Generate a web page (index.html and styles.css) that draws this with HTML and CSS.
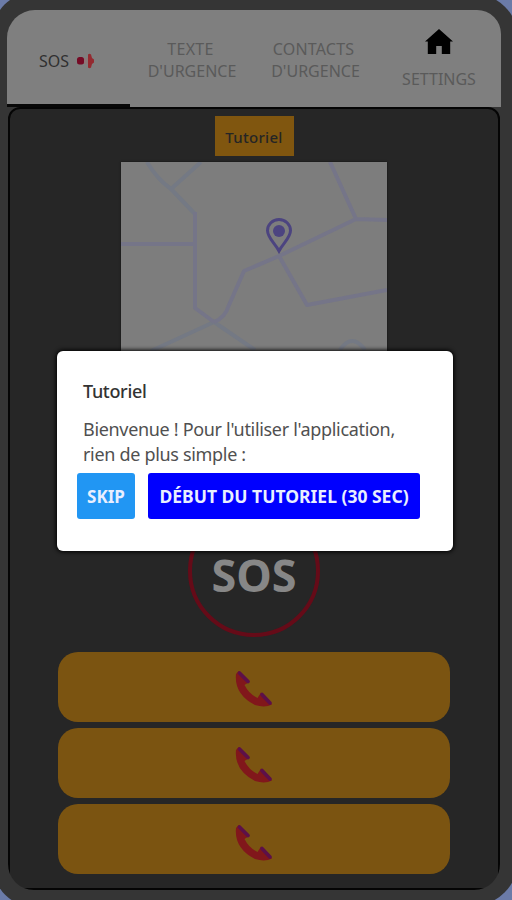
FILE: index.html
```html
<!DOCTYPE html>
<html lang="fr">
<head>
<meta charset="utf-8">
<title>SOS</title>
<link rel="stylesheet" href="styles.css">
</head>
<body>
<div class="phone">
  <div class="screen">
    <nav class="tabs">
      <div class="tab active"><span>SOS</span>
        <svg width="20" height="16" viewBox="0 0 20 16"><rect x="8" y="5" width="5" height="6" fill="#8b7778"/><rect x="2" y="4" width="7" height="7.500" rx="2.500" fill="#750a25"/><path d="M13 1.500q1.500-1.500 3 0l1 3.500 2 1.500v3L17 11l-1 3.500q-1.500 1.500-3 0z" fill="#942a30"/></svg>
      </div>
      <div class="tab two"><span class="texte">TEXTE</span><span>D'URGENCE</span></div>
      <div class="tab two"><span class="contacts">CONTACTS</span><span>D'URGENCE</span></div>
      <div class="tab settings">
        <svg width="28" height="26" viewBox="0 0 28 26"><path d="M14 0 0 12.500h2.800V25h8.400v-8h5.600v8h8.400V12.500H28z" fill="#000"/></svg>
        <span>SETTINGS</span>
      </div>
    </nav>
    <main class="content">
      <div class="tuto">Tutoriel</div>
      <svg class="map" width="266" height="266" viewBox="0 0 266 266">
        <rect width="266" height="266" fill="#7d7d7d"/>
        <g fill="none" stroke="#757588" stroke-width="4" stroke-linejoin="round">
          <path stroke="#747984" d="M26 0Q36 17 50 27L74 52M50 27 80 0M93 160 30 189M93 160 134 188M219 188q12-18 25 0"/>
          <path d="M74 50V146L93 160M0 82H74M93 160Q104 156 108 143L123 109 158 94 235 57 266 58M209 0 235 57M158 94 186 143 266 128"/>
        </g>
        <path d="M158 89C154 81 146.500 76 146.500 68.500a11.500 11 0 0 1 23 0C169.500 76 162 81 158 89z" fill="#7d7d7d" stroke="#4c4480" stroke-width="3"/>
        <circle cx="158" cy="69" r="6" fill="#4c4480"/>
      </svg>
      <div class="sos"><span>SOS</span></div>
      <div class="calls">
        <div class="call"><svg width="38" height="38" viewBox="0 0 38 38"><path d="M3.500 1 14 12 9.500 15Q14 24 22.500 28L26 22.500 37 34.500Q30 38 20 35Q-1 24 1 4z" fill="#81171b"/><path d="M4.500 3 13 11.500M27 24.500 35 33" stroke="#5c1049" stroke-width="3.600" stroke-linecap="round"/></svg></div>
        <div class="call"><svg width="38" height="38" viewBox="0 0 38 38"><path d="M3.500 1 14 12 9.500 15Q14 24 22.500 28L26 22.500 37 34.500Q30 38 20 35Q-1 24 1 4z" fill="#81171b"/><path d="M4.500 3 13 11.500M27 24.500 35 33" stroke="#5c1049" stroke-width="3.600" stroke-linecap="round"/></svg></div>
        <div class="call"><svg width="38" height="38" viewBox="0 0 38 38"><path d="M3.500 1 14 12 9.500 15Q14 24 22.500 28L26 22.500 37 34.500Q30 38 20 35Q-1 24 1 4z" fill="#81171b"/><path d="M4.500 3 13 11.500M27 24.500 35 33" stroke="#5c1049" stroke-width="3.600" stroke-linecap="round"/></svg></div>
      </div>
    </main>
  </div>
</div>
<div class="dialog" role="dialog">
  <h2>Tutoriel</h2>
  <p>Bienvenue ! Pour l'utiliser l'application,</p>
  <p>rien de plus simple :</p>
  <div class="actions">
    <button class="skip">SKIP</button>
    <button class="start">DÉBUT DU TUTORIEL (30 SEC)</button>
  </div>
</div>
</body>
</html>
```
FILE: styles.css
```css
* { box-sizing: border-box; }
body { margin: 0; width: 512px; height: 900px; overflow: hidden; background: #6b7ba8; font-family: "Noto Sans", "Open Sans", sans-serif; }
.phone { width: 524px; height: 912px; margin: -6px -6px -6px; padding: 16px 17px 0 13px; background: #353535; border-radius: 36px 44px 46px 38px; }
.screen { width: 494px; height: 880px; }
.tabs { height: 97px; display: grid; grid-template-columns: 123px 124px 123px 124px; background: #7f7f7f; border-radius: 28px 24px 0 0; overflow: hidden; color: #5a5a5a; font-size: 16px; line-height: 22px; }
.tab { display: flex; align-items: center; white-space: nowrap; }
.active { color: #303030; padding: 7px 0 0 32px; gap: 6px; border-bottom: 3px solid #080808; }
.two { flex-direction: column; justify-content: center; padding-top: 2px; }
.texte { margin-right: 3px; letter-spacing: .3px; }
.contacts { margin-right: 4px; letter-spacing: .2px; }
.settings { flex-direction: column; padding-top: 19px; gap: 13px; }
.content { height: 783px; margin: 0 1px; border: 2px solid #050505; border-radius: 12px 12px 14px 14px; clip-path: inset(0 round 0 0 26px 26px); background: #262626; display: flex; flex-direction: column; align-items: center; padding-top: 7px; }
.tuto { width: 79px; height: 40px; background: #80560f; color: #252525; font-size: 15px; font-weight: 500; line-height: 43px; text-align: center; letter-spacing: .3px; }
.map { margin-top: 6px; display: block; box-shadow: 0 0 2px #111; }
.sos { width: 132px; height: 132px; margin-top: 77px; border: 4px solid #650b18; border-radius: 50%; color: #878787; font-weight: 700; font-size: 45px; line-height: 131px; text-align: center; }
.calls { margin-top: 15px; display: grid; gap: 6px; }
.call { width: 392px; height: 70px; border-radius: 20px; background: #7b5411; display: flex; align-items: center; justify-content: center; padding-top: 4px; }
.call:last-child { padding-top: 7px; }
.dialog { position: absolute; left: 57px; top: 351px; width: 396px; height: 200px; padding: 28px 0 0 26px; background: #fff; border-radius: 6px; box-shadow: 0 0 4px 1px #000; }
.dialog h2, .dialog p { margin: 0; white-space: nowrap; line-height: 25px; letter-spacing: -.32px; }
.dialog h2 { font-size: 18px; font-weight: 500; color: #333; margin-bottom: 13px; }
.dialog p { font-size: 18px; color: #505050; }
.actions { display: flex; gap: 13px; margin: 6px 0 0 -6px; }
.actions button { height: 46px; padding: 0; border: 0; border-radius: 3px; color: #e9efff; font: 700 17px "Noto Sans", sans-serif; white-space: nowrap; }
.actions .skip { width: 58px; background: #2196f3; }
.actions .start { width: 272px; background: #0000ff; font-size: 17.5px; }
```
